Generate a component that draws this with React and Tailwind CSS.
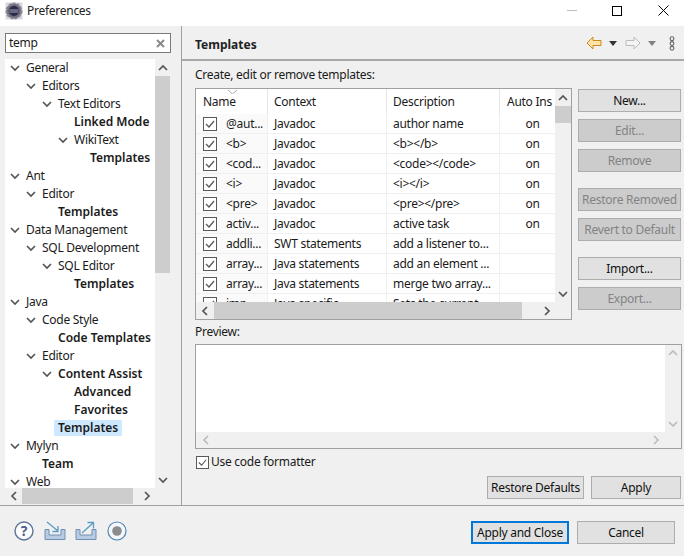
import React from "react";

const TREE = [
  ["General", 0, true],
  ["Editors", 1, true],
  ["Text Editors", 2, true],
  ["Linked Mode", 3, false, true],
  ["WikiText", 3, true],
  ["Templates", 4, false, true],
  ["Ant", 0, true],
  ["Editor", 1, true],
  ["Templates", 2, false, true],
  ["Data Management", 0, true],
  ["SQL Development", 1, true],
  ["SQL Editor", 2, true],
  ["Templates", 3, false, true],
  ["Java", 0, true],
  ["Code Style", 1, true],
  ["Code Templates", 2, false, true],
  ["Editor", 1, true],
  ["Content Assist", 2, true, true],
  ["Advanced", 3, false, true],
  ["Favorites", 3, false, true],
  ["Templates", 2, false, true, true],
  ["Mylyn", 0, true],
  ["Team", 1, false, true],
  ["Web", 0, true],
];

const ROWS = [
  ["@aut...", "Javadoc", "author name", "on"],
  ["<b>", "Javadoc", "<b></b>", "on"],
  ["<cod...", "Javadoc", "<code></code>", "on"],
  ["<i>", "Javadoc", "<i></i>", "on"],
  ["<pre>", "Javadoc", "<pre></pre>", "on"],
  ["activ...", "Javadoc", "active task", "on"],
  ["addli...", "SWT statements", "add a listener to...", ""],
  ["array...", "Java statements", "add an element ...", ""],
  ["array...", "Java statements", "merge two array...", ""],
  ["imp...", "Java specific", "Sets the current...", ""],
];

const Chevron = ({ dir = "down", color = "#555" }) => {
  const paths = {
    down: "M1 3 L5 7 L9 3",
    up: "M1 7 L5 3 L9 7",
    left: "M7 1 L3 5 L7 9",
    right: "M3 1 L7 5 L3 9",
  };
  return (
    <svg width="10" height="10" viewBox="0 0 10 10" className="block shrink-0">
      <path d={paths[dir]} fill="none" stroke={color} strokeWidth="1.7" />
    </svg>
  );
};

const Check = ({ size = 14 }) => (
  <div
    className="shrink-0 border border-[#5a5a5a] bg-white"
    style={{ width: size, height: size }}
  >
    <svg viewBox="0 0 12 12" className="block h-full w-full">
      <path d="M2 6 L5 9 L10 3" fill="none" stroke="#555" strokeWidth="1.2" />
    </svg>
  </div>
);

const SideButton = ({ label, disabled, className = "" }) => (
  <button
    className={`h-[23px] w-[103px] border border-[#adadad] text-center ${
      disabled ? "bg-[#cccccc] text-[#838383]" : "bg-[#e1e1e1] text-[#111]"
    } ${className}`}
  >
    {label}
  </button>
);

const BottomButton = ({ label, className = "" }) => (
  <button className={`h-[23px] border border-[#adadad] bg-[#e1e1e1] text-center text-[#111] ${className}`}>
    {label}
  </button>
);

const Sash = ({ className = "" }) => <div className={`bg-[#a0a0a0] ${className}`} />;

const App = () => {
  return (
    <div className="flex h-[556px] w-[684px] flex-col overflow-hidden bg-[#f0f0f0] text-[12px] leading-[16px] tracking-[-0.27px] text-[#1a1a1a] [font-family:'Noto_Sans',sans-serif]">
      {/* TITLE BAR */}
      <div className="flex h-[26px] shrink-0 items-center bg-white">
        <svg width="18" height="18" viewBox="0 0 18 18" className="mb-[4px] ml-[5px]">
          <rect x="0.5" y="0.5" width="17" height="17" fill="#d9d8de" />
          <circle cx="9" cy="9" r="7.5" fill="#6d6a78" stroke="#8a8896" strokeWidth="2" strokeDasharray="3 1.2" />
          <circle cx="9" cy="9" r="5" fill="#2b2a4a" />
          <path d="M4.5 8 H13.5 M4.5 10 H13.5" stroke="#c9c8d6" strokeWidth="0.8" />
        </svg>
        <span className="mb-[5px] ml-[4px] text-[#222]">Preferences</span>
        <div className="mb-[5px] ml-auto flex items-center">
          <div className="h-px w-[10px] bg-[#bdbdbd]" />
          <div className="ml-[35px] h-[10px] w-[10px] border border-black" />
          <svg width="11" height="11" viewBox="0 0 11 11" className="ml-[36px] mr-[15px]">
            <path d="M0.5 0.5 L10.5 10.5 M10.5 0.5 L0.5 10.5" stroke="#000" strokeWidth="1" />
          </svg>
        </div>
      </div>

      {/* MAIN */}
      <div className="flex min-h-0 flex-1">
        {/* LEFT TREE */}
        <div className="flex w-[181px] shrink-0 flex-col pl-[5px] pr-[10px] pt-[7px]">
          <div className="flex h-[20px] w-[166px] items-center border border-[#7a7a7a] bg-white pl-[3px] pr-[5px]">
            <span className="flex-1">temp</span>
            <svg width="9" height="9" viewBox="0 0 9 9">
              <path d="M1 1 L8 8 M8 1 L1 8" stroke="#8a8a8a" strokeWidth="2" />
            </svg>
          </div>
          <div className="mt-[6px] flex h-[445px] w-[165px] flex-col">
            <div className="flex min-h-0 flex-1">
              <div className="min-w-0 flex-1 overflow-hidden bg-white">
                {TREE.map(([label, level, expanded, bold, selected], i) => (
                  <div key={i} className="relative flex h-[18px] items-center" style={{ paddingLeft: 21 + level * 16 }}>
                    {expanded && (
                      <span className="absolute" style={{ left: 5 + level * 16 }}>
                        <Chevron />
                      </span>
                    )}
                    <span
                      className={`whitespace-nowrap ${bold ? "font-semibold tracking-normal" : ""} ${
                        selected ? "-ml-[4px] bg-[#cde8ff] pl-[4px] pr-[4px]" : ""
                      }`}
                    >
                      {label}
                    </span>
                  </div>
                ))}
              </div>
              <div className="flex w-[15px] shrink-0 flex-col bg-[#f0f0f0]">
                <div className="flex h-[17px] shrink-0 items-center justify-center">
                  <Chevron dir="up" />
                </div>
                <div className="h-[197px] bg-[#cdcdcd]" />
                <div className="mt-auto flex h-[17px] shrink-0 items-center justify-center">
                  <Chevron />
                </div>
              </div>
            </div>
            <div className="flex h-[16px] shrink-0 items-center bg-[#f0f0f0] pr-[15px]">
              <div className="flex w-[17px] justify-center">
                <Chevron dir="left" />
              </div>
              <div className="h-full w-[111px] bg-[#cdcdcd]" />
              <div className="ml-auto flex w-[17px] justify-center">
                <Chevron dir="right" />
              </div>
            </div>
          </div>
        </div>

        <Sash className="w-px shrink-0" />

        {/* RIGHT PAGE */}
        <div className="flex min-w-0 flex-1 flex-col">
          <div className="flex h-[35px] shrink-0 items-center border-b-2 border-[#a9a9a9] pl-[13px]">
            <span className="mt-[5px] font-bold tracking-normal text-[#222]">Templates</span>
            <div className="ml-auto mr-[9px] mt-[1px] flex items-center">
              <svg width="16" height="14" viewBox="0 0 16 14">
                <path d="M7 1 L1 7 L7 13 V9.5 H15 V4.5 H7 Z" fill="#fbe4a6" stroke="#c98a1b" strokeWidth="1" />
              </svg>
              <svg width="8" height="5" viewBox="0 0 8 5" className="ml-[7px]">
                <path d="M0 0 H8 L4 5 Z" fill="#333" />
              </svg>
              <svg width="16" height="14" viewBox="0 0 16 14" className="ml-[8px]">
                <path d="M9 1 L15 7 L9 13 V9.5 H1 V4.5 H9 Z" fill="#f4f4f4" stroke="#bcbcbc" strokeWidth="1" />
              </svg>
              <svg width="8" height="5" viewBox="0 0 8 5" className="ml-[7px]">
                <path d="M0 0 H8 L4 5 Z" fill="#808080" />
              </svg>
              <svg width="6" height="15" viewBox="0 0 6 15" className="ml-[13px]">
                <circle cx="3" cy="2.7" r="1.9" fill="none" stroke="#666" strokeWidth="1.1" />
                <circle cx="3" cy="7.5" r="1.9" fill="none" stroke="#666" strokeWidth="1.1" />
                <circle cx="3" cy="12.3" r="1.9" fill="none" stroke="#666" strokeWidth="1.1" />
              </svg>
            </div>
          </div>

          <div className="flex min-h-0 flex-1 flex-col pl-[13px] pr-[2px]">
            <div className="mt-[6px] h-[16px]">Create, edit or remove templates:</div>
            <div className="mt-[5px] flex">
              {/* TABLE */}
              <div className="flex h-[232px] w-[377px] shrink-0 flex-col border border-[#a0a0a0] bg-white">
                <div className="flex min-h-0 flex-1">
                  <div className="min-w-0 flex-1 overflow-hidden">
                    <div className="relative flex h-[25px] items-center">
                      <svg width="9" height="4" viewBox="0 0 9 4" className="absolute left-[32px] top-[1px]">
                        <path d="M0 0 L4.5 4 L9 0" fill="none" stroke="#a8a8a8" strokeWidth="1" />
                      </svg>
                      <div className="flex h-full w-[72px] shrink-0 items-center border-r border-[#e5e5e5] pl-[7px]">Name</div>
                      <div className="flex h-full w-[119px] shrink-0 items-center border-r border-[#e5e5e5] pl-[6px]">Context</div>
                      <div className="flex h-full w-[113px] shrink-0 items-center border-r border-[#e5e5e5] pl-[6px]">Description</div>
                      <div className="flex h-full flex-1 items-center overflow-hidden whitespace-nowrap pl-[7px]">Auto Ins</div>
                    </div>
                    {ROWS.map((r, i) => (
                      <div key={i} className="flex h-[20px] items-center border-b border-[#f0f0f0]">
                        <div className="flex h-full w-[72px] shrink-0 items-center border-r border-[#f0f0f0] bg-[#fafafa] pl-[7px]">
                          <Check size={14} />
                          <span className="ml-[9px] whitespace-nowrap">{r[0]}</span>
                        </div>
                        <div className="flex h-full w-[119px] shrink-0 items-center border-r border-[#f0f0f0] pl-[6px] whitespace-nowrap">{r[1]}</div>
                        <div className="flex h-full w-[113px] shrink-0 items-center border-r border-[#f0f0f0] pl-[6px] whitespace-nowrap">{r[2]}</div>
                        <div className="flex h-full flex-1 items-center justify-center pl-[10px]">{r[3]}</div>
                      </div>
                    ))}
                  </div>
                  <div className="flex w-[16px] shrink-0 flex-col bg-[#f0f0f0]">
                    <div className="flex h-[17px] shrink-0 items-center justify-center">
                      <Chevron dir="up" />
                    </div>
                    <div className="h-[17px] bg-[#cdcdcd]" />
                    <div className="mt-auto flex h-[17px] shrink-0 items-center justify-center">
                      <Chevron />
                    </div>
                  </div>
                </div>
                <div className="flex h-[17px] shrink-0 items-center bg-[#f0f0f0] pr-[16px]">
                  <div className="flex w-[18px] justify-center">
                    <Chevron dir="left" />
                  </div>
                  <div className="h-full w-[308px] bg-[#cdcdcd]" />
                  <div className="ml-auto flex w-[17px] justify-center">
                    <Chevron dir="right" />
                  </div>
                </div>
              </div>

              {/* BUTTON COLUMN */}
              <div className="ml-[6px] mt-px flex flex-col">
                <SideButton label="New..." />
                <SideButton label="Edit..." disabled className="mt-[7px]" />
                <SideButton label="Remove" disabled className="mt-[7px]" />
                <SideButton label="Restore Removed" disabled className="mt-[16px]" />
                <SideButton label="Revert to Default" disabled className="mt-[7px]" />
                <SideButton label="Import..." className="mt-[16px]" />
                <SideButton label="Export..." disabled className="mt-[7px]" />
              </div>
            </div>

            <div className="mt-[4px] h-[16px]">Preview:</div>
            <div className="mt-[4px] flex h-[105px] w-[487px] flex-col border border-[#a0a0a0] bg-white">
              <div className="flex min-h-0 flex-1">
                <div className="flex-1" />
                <div className="flex w-[16px] flex-col items-center justify-between bg-[#f0f0f0] py-[3px]">
                  <Chevron dir="up" color="#bdbdbd" />
                  <Chevron color="#bdbdbd" />
                </div>
              </div>
              <div className="flex h-[16px] items-center justify-between bg-[#f0f0f0] pl-[5px] pr-[20px]">
                <Chevron dir="left" color="#bdbdbd" />
                <Chevron dir="right" color="#bdbdbd" />
              </div>
            </div>

            <div className="ml-px mt-[5px] flex h-[16px] items-center">
              <Check size={13} />
              <span className="ml-[2px]">Use code formatter</span>
            </div>

            <div className="mt-[6px] flex justify-end pr-[1px]">
              <BottomButton label="Restore Defaults" className="w-[97px]" />
              <BottomButton label="Apply" className="ml-[7px] w-[90px]" />
            </div>
          </div>
        </div>
      </div>

      <Sash className="h-px shrink-0" />

      {/* FOOTER */}
      <div className="flex h-[50px] shrink-0 items-start pt-[15px]">
        <div className="ml-[14px] flex items-center">
          <svg width="20" height="20" viewBox="0 0 20 20">
            <circle cx="10" cy="10" r="9" fill="#fbfcfe" stroke="#5f7396" strokeWidth="1.4" />
            <text x="10" y="15" textAnchor="middle" fontSize="14" fontWeight="700" fill="#4b5f86" fontFamily="Noto Sans">?</text>
          </svg>
          <svg width="22" height="20" viewBox="0 0 22 20" className="ml-[10px]">
            <path d="M1 8.5 H5 V14 H17 V8.5 H21 V18.5 H1 Z" fill="#b8cbe2" stroke="#6f8fb5" strokeWidth="1" />
            <path d="M3 1 L14 10 M14 5 V10.5 H8.5" fill="none" stroke="#5b9cc4" strokeWidth="1.3" />
          </svg>
          <svg width="22" height="20" viewBox="0 0 22 20" className="ml-[9px]">
            <path d="M1 8.5 H5 V14 H17 V8.5 H21 V18.5 H1 Z" fill="#b8cbe2" stroke="#6f8fb5" strokeWidth="1" />
            <path d="M7 12 L18 2 M12.5 1.5 H18.5 V7.5" fill="none" stroke="#5b9cc4" strokeWidth="1.3" />
          </svg>
          <svg width="20" height="20" viewBox="0 0 20 20" className="ml-[10px]">
            <circle cx="10" cy="10" r="9" fill="#f4f7fb" stroke="#4f86b5" strokeWidth="1.2" />
            <circle cx="10" cy="10" r="4.8" fill="#8c8c8c" />
          </svg>
        </div>
        <div className="ml-auto mr-[9px] flex">
          <button className="h-[23px] w-[98px] border-2 border-[#0078d7] bg-[#e1e1e1] text-center text-[#111]">Apply and Close</button>
          <BottomButton label="Cancel" className="ml-[8px] w-[98px]" />
        </div>
      </div>
    </div>
  );
};

export default App;
